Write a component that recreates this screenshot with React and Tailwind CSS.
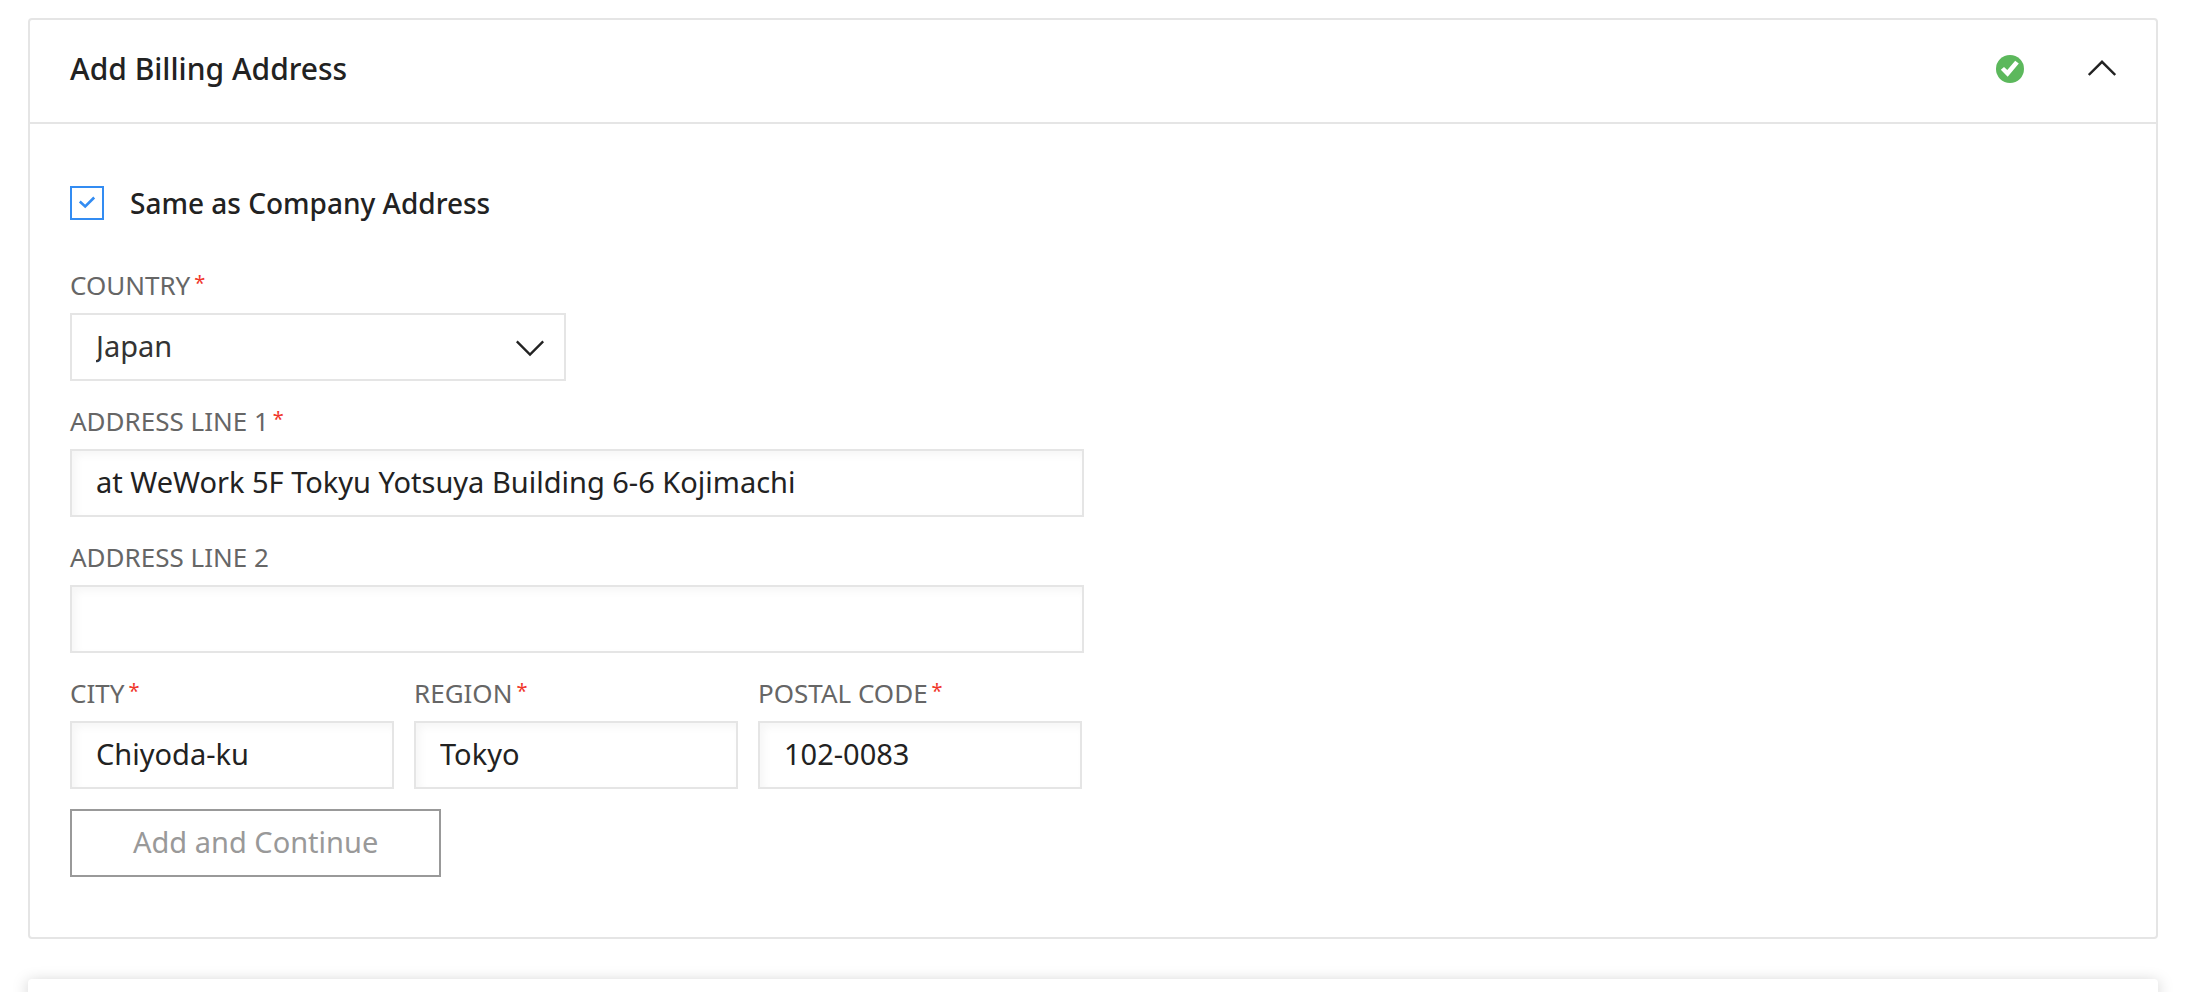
import { useState } from "react";

const inputClass =
  "block h-[68px] w-full min-w-0 border-2 border-[#e5e5e5] bg-white px-6 pb-[3px] text-[29px] text-[#222222] shadow-[inset_4px_4px_8px_rgba(0,0,0,0.04)] outline-none focus:border-[#338cf2]";

function Field({ id, label, required, children }) {
  return (
    <div className="flex flex-col gap-[10px]">
      <label htmlFor={id} className="h-9 text-[26px] leading-9 text-[#666666] uppercase">
        {label}
        {required && <span className="ml-1 align-[5px] text-[20px] leading-none text-[#f0372b]">*</span>}
      </label>
      {children}
    </div>
  );
}

function TextField({ id, label, required, defaultValue }) {
  return (
    <Field id={id} label={label} required={required}>
      <input id={id} type="text" required={required} defaultValue={defaultValue} className={inputClass} />
    </Field>
  );
}

export default function App() {
  const [open, setOpen] = useState(true);
  return (
    <main className="flex min-h-screen flex-col gap-10 overflow-hidden bg-white pt-[18px] pr-[38px] pl-7 font-['Noto_Sans',sans-serif] text-[#222222]">
      <section className="rounded-[4px] border-2 border-[#e5e5e5] bg-white">
        <header className="flex items-center gap-16 border-b-2 border-[#e5e5e5] px-10 pt-7 pb-8">
          <h2 className="flex-1 text-[30px] leading-[42px] font-medium">Add Billing Address</h2>
          <svg className="size-7 shrink-0" viewBox="0 0 28 28" role="img" aria-label="Complete">
            <circle cx="14" cy="14" r="14" fill="#5cb85c" />
            <path d="M4.8 14.7 8 11.9l3.3 3L19.2 5.7l3.6 2.9L11.7 21.8z" fill="#fff" />
          </svg>
          <button type="button" aria-label="Toggle section" aria-expanded={open} onClick={() => setOpen(!open)}>
            <svg className={open ? "block size-7" : "block size-7 rotate-180"} viewBox="0 0 28 28" fill="none" stroke="#222" strokeWidth="2.4">
              <path d="M.8 20 14 6.8 27.2 20" />
            </svg>
          </button>
        </header>

        {open && (
          <form className="px-10 pt-[62px] pb-[60px]" onSubmit={(e) => e.preventDefault()}>
            <div className="flex items-center gap-[26px]">
              <span className="grid size-[34px] shrink-0">
                <input
                  id="same"
                  type="checkbox"
                  defaultChecked
                  className="peer col-start-1 row-start-1 size-[34px] appearance-none border-2 border-[#338cf2] bg-white"
                />
                <svg
                  className="pointer-events-none invisible col-start-1 row-start-1 size-[34px] peer-checked:visible"
                  viewBox="0 0 34 34"
                  fill="none"
                  stroke="#338cf2"
                  strokeWidth="2.6"
                >
                  <path d="m9.8 15.5 5.4 5 9-9" />
                </svg>
              </span>
              <label htmlFor="same" className="text-[28px] leading-[34px] font-medium">
                Same as Company Address
              </label>
            </div>

            <div className="mt-[47px] flex max-w-[1014px] flex-col gap-[22px]">
              <Field id="country" label="Country" required>
                <div className="grid w-full max-w-[496px] items-center">
                  <select
                    id="country"
                    defaultValue="Japan"
                    className="col-start-1 row-start-1 h-[68px] w-full appearance-none border-2 border-[#e5e5e5] bg-white px-6 pb-[3px] text-[29px] text-[#333333] outline-none focus:border-[#338cf2]"
                  >
                    <option>Japan</option>
                  </select>
                  <svg
                    className="pointer-events-none col-start-1 row-start-1 mr-[22px] size-7 justify-self-end"
                    viewBox="0 0 28 28"
                    fill="none"
                    stroke="#222"
                    strokeWidth="2.4"
                  >
                    <path d="M.8 8.4 14 21.6 27.2 8.4" />
                  </svg>
                </div>
              </Field>
              <TextField id="line1" label="Address Line 1" required defaultValue="at WeWork 5F Tokyu Yotsuya Building 6-6 Kojimachi" />
              <TextField id="line2" label="Address Line 2" />
              <div className="grid max-w-[1012px] grid-cols-3 gap-5">
                <TextField id="city" label="City" required defaultValue="Chiyoda-ku" />
                <TextField id="region" label="Region" required defaultValue="Tokyo" />
                <TextField id="postal" label="Postal Code" required defaultValue="102-0083" />
              </div>
            </div>

            <button type="submit" className="mt-5 block h-[68px] border-2 border-[#999999] bg-white px-[61px] pb-[3px] text-[29px] text-[#999999]">
              Add and Continue
            </button>
          </form>
        )}
      </section>

      <section className="flex-1 rounded-t-[4px] bg-white shadow-[0_4px_16px_rgba(0,0,0,0.25)]" />
    </main>
  );
}
